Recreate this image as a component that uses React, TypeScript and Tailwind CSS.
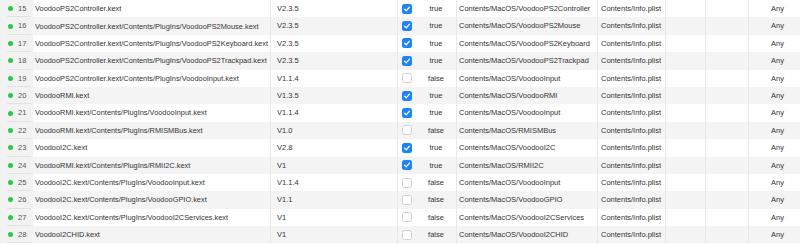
type Kext = {
  id: number;
  path: string;
  version: string;
  enabled: boolean;
  exec: string;
};

const kexts: Kext[] = [
  { id: 15, path: "VoodooPS2Controller.kext", version: "V2.3.5", enabled: true, exec: "VoodooPS2Controller" },
  { id: 16, path: "VoodooPS2Controller.kext/Contents/PlugIns/VoodooPS2Mouse.kext", version: "V2.3.5", enabled: true, exec: "VoodooPS2Mouse" },
  { id: 17, path: "VoodooPS2Controller.kext/Contents/PlugIns/VoodooPS2Keyboard.kext", version: "V2.3.5", enabled: true, exec: "VoodooPS2Keyboard" },
  { id: 18, path: "VoodooPS2Controller.kext/Contents/PlugIns/VoodooPS2Trackpad.kext", version: "V2.3.5", enabled: true, exec: "VoodooPS2Trackpad" },
  { id: 19, path: "VoodooPS2Controller.kext/Contents/PlugIns/VoodooInput.kext", version: "V1.1.4", enabled: false, exec: "VoodooInput" },
  { id: 20, path: "VoodooRMI.kext", version: "V1.3.5", enabled: true, exec: "VoodooRMI" },
  { id: 21, path: "VoodooRMI.kext/Contents/PlugIns/VoodooInput.kext", version: "V1.1.4", enabled: true, exec: "VoodooInput" },
  { id: 22, path: "VoodooRMI.kext/Contents/PlugIns/RMISMBus.kext", version: "V1.0", enabled: false, exec: "RMISMBus" },
  { id: 23, path: "VoodooI2C.kext", version: "V2.8", enabled: true, exec: "VoodooI2C" },
  { id: 24, path: "VoodooRMI.kext/Contents/PlugIns/RMII2C.kext", version: "V1", enabled: true, exec: "RMII2C" },
  { id: 25, path: "VoodooI2C.kext/Contents/PlugIns/VoodooInput.kext", version: "V1.1.4", enabled: false, exec: "VoodooInput" },
  { id: 26, path: "VoodooI2C.kext/Contents/PlugIns/VoodooGPIO.kext", version: "V1.1", enabled: false, exec: "VoodooGPIO" },
  { id: 27, path: "VoodooI2C.kext/Contents/PlugIns/VoodooI2CServices.kext", version: "V1", enabled: false, exec: "VoodooI2CServices" },
  { id: 28, path: "VoodooI2CHID.kext", version: "V1", enabled: false, exec: "VoodooI2CHID" },
];

function Checkbox({ checked }: { checked: boolean }) {
  if (!checked) {
    return <span className="block w-[10px] h-[10px] rounded-[2.5px] bg-white border border-[#cfcfcf]" />;
  }
  return (
    <span className="flex items-center justify-center w-[10px] h-[10px] rounded-[2.5px] bg-[#1b84fa]">
      <svg width="8" height="8" viewBox="0 0 8 8" fill="none">
        <path d="M1.6 4.2 L3.3 5.8 L6.4 2.2" stroke="white" strokeWidth="1.3" strokeLinecap="round" strokeLinejoin="round" />
      </svg>
    </span>
  );
}

export default function App() {
  return (
    <div className="w-[800px] h-[248px] overflow-hidden bg-white font-['Liberation_Sans',Arial,sans-serif] text-[7.5px] text-[#333]">
      {kexts.map((k, i) => (
        <div
          key={k.id}
          className={`grid grid-cols-[33px_237px_127px_59px_141px_68px_40px_43px_52px] h-[17.4px] items-stretch ${
            i % 2 === 1 ? "bg-[#f4f4f4]" : "bg-white"
          }`}
        >
          {/* gutter: status dot + index */}
          <div className="relative flex items-center bg-[#f2f2f2] pl-[8px]">
            <span className="w-[5px] h-[5px] rounded-full bg-[#2bc84a]" />
            <span className="ml-[5px] text-[#555]">{k.id}</span>
            <span className="absolute left-[7px] right-[2px] bottom-0 h-px bg-[#e2e2e2]" />
          </div>
          <div className="flex items-center pl-[2px] text-[7.4px] whitespace-nowrap overflow-hidden">{k.path}</div>
          <div className="flex items-center pl-[6px] border-l border-[#e8e8e8]">{k.version}</div>
          <div className="flex items-center pl-[4px] border-l border-[#e8e8e8]">
            <Checkbox checked={k.enabled} />
            <span className="ml-[9px] w-[30px] text-center">{k.enabled ? "true" : "false"}</span>
          </div>
          <div className="flex items-center pl-[2px] border-l border-[#e8e8e8] whitespace-nowrap">
            Contents/MacOS/{k.exec}
          </div>
          <div className="flex items-center pl-[3px] border-l border-[#e8e8e8] whitespace-nowrap">Contents/Info.plist</div>
          <div className="border-l border-[#e8e8e8]" />
          <div className="border-l border-[#e8e8e8]" />
          <div className="flex items-center pl-[22px] border-l border-[#e8e8e8]">Any</div>
        </div>
      ))}
    </div>
  );
}
